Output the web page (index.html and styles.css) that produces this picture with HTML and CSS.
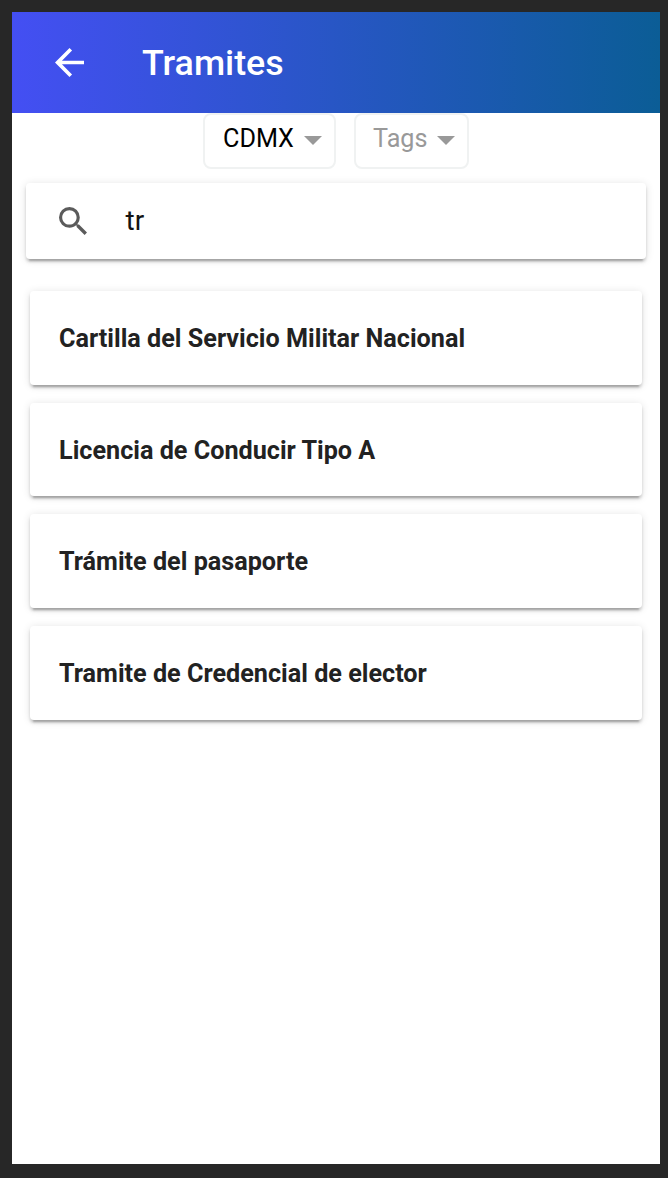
FILE: index.html
```html
<!DOCTYPE html>
<html lang="es">
<head>
<meta charset="utf-8">
<title>Tramites</title>
<link rel="stylesheet" href="styles.css">
</head>
<body>
<div class="screen">
  <header class="toolbar">
    <svg class="back" viewBox="4 4 16 16"><path d="M20 11H7.83l5.59-5.59L12 4l-8 8 8 8 1.41-1.41L7.83 13H20v-2z"/></svg>
    <h1 class="title">Tramites</h1>
  </header>
  <div class="filters">
    <div class="select select-state"><span>CDMX</span><i class="caret"></i></div>
    <div class="select select-tags"><span>Tags</span><i class="caret"></i></div>
  </div>
  <div class="search">
    <svg class="glass" viewBox="3 3 17.5 17.5"><path d="M15.5 14h-.79l-.28-.27A6.471 6.471 0 0 0 16 9.5 6.5 6.5 0 1 0 9.5 16c1.61 0 3.09-.59 4.23-1.57l.27.28v.79l5 4.99L20.49 19l-4.99-5zm-6 0C7.01 14 5 11.99 5 9.5S7.01 5 9.5 5 14 7.01 14 9.5 11.99 14 9.5 14z"/></svg>
    <span class="query">tr</span>
  </div>
  <main class="list">
    <div class="card">Cartilla del Servicio Militar Nacional</div>
    <div class="card">Licencia de Conducir Tipo A</div>
    <div class="card">Trámite del pasaporte</div>
    <div class="card">Tramite de Credencial de elector</div>
  </main>
</div>
</body>
</html>
```
FILE: styles.css
```css
* { box-sizing: border-box; }
body { margin: 0; height: 1178px; padding: 12px 8px 14px 12px; background: #272727; font-family: Roboto, sans-serif; }
.screen { height: 1152px; background: #fff; }
.toolbar { display: flex; align-items: center; height: 100.6px; padding-left: 43px; background: linear-gradient(to right, #444ff3, #0b5d96); }
.back { width: 29px; height: 29px; fill: #fff; }
.title { margin: 0 0 0 58px; padding-top: 1.4px; font-size: 35.8px; font-weight: 500; line-height: 42px; color: #fff; }
.filters { display: flex; gap: 18px; height: 55.4px; padding-left: 191px; }
.select { display: flex; align-items: center; justify-content: space-between; height: 56px; padding: 0 12px 4.6px 18px; border: 2px solid #f0f2f2; border-radius: 8px; font-size: 25.2px; }
.select-state { width: 133px; color: #000; }
.select-tags { width: 115px; padding-left: 17px; color: #999; }
.caret { border: solid transparent; border-width: 9px 9px 0; border-top-color: #999; margin-top: 4px; }
.search { display: flex; align-items: center; height: 76px; margin: 15px 14px 0; padding-left: 33px; border-radius: 4px; box-shadow: 0 5px 2px -3px rgba(0,0,0,.2), 0 3px 3px rgba(0,0,0,.15), 0 1px 8px rgba(0,0,0,.12); }
.glass { width: 28px; height: 28px; fill: #5b5b5b; }
.query { margin-left: 38.5px; font-size: 28px; color: #141414; }
.list { display: flex; flex-direction: column; gap: 17.8px; padding: 32px 18px 0; }
.card { height: 93.8px; padding: 33px 29px; border-radius: 4px; font-size: 25.2px; line-height: 30px; font-weight: 700; color: #222; box-shadow: 0 5px 2px -3px rgba(0,0,0,.2), 0 3px 3px rgba(0,0,0,.15), 0 1px 8px rgba(0,0,0,.12); }
```
